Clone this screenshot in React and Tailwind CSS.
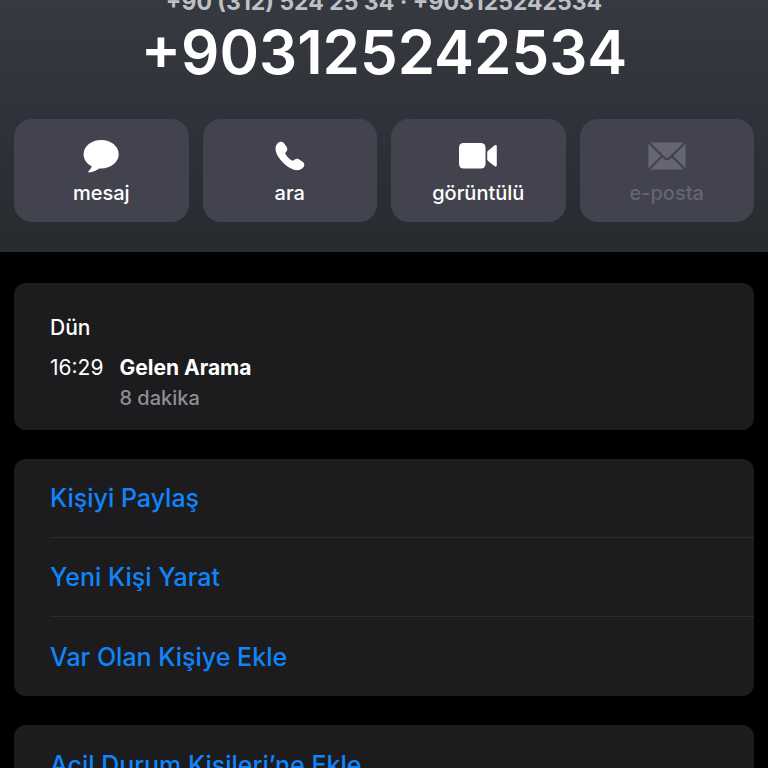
import React from 'react'

const MessageIcon = () => (
  <svg viewBox="0 0 36 34" className="w-9 h-[34px]" fill="currentColor" aria-hidden="true">
    <path d="M18.2 1C8.600 1 .6 7.200 .6 15.200c0 5 2.900 9.300 7.600 11.800.5.300.6.700.3 1.200-.7 1.400-1.900 2.900-2.900 3.900-.7.700-.3 1.500.7 1.400 3.100-.3 7-2 9.600-3.700.5-.3.900-.4 1.500-.4h.8c9.700 0 17.500-6.200 17.500-14.200S27.900 1 18.200 1z" />
  </svg>
)

const PhoneIcon = () => (
  <svg viewBox="0 0 30 30" className="w-[30px] h-[30px]" fill="currentColor" aria-hidden="true">
    <path d="M2.700 2.200C4.700.2 7.400.2 9 2.200l2.500 3.600c1.300 2 1 3.600-.5 5.100-.9 1-1 1.500-.3 2.500 1.600 2.300 3.600 4.300 5.900 5.900 1 .7 1.600.6 2.600-.3 1.600-1.400 3.300-1.700 5.100-.5l3.500 2.400c2 1.500 2 3.900.2 5.900-2.300 2.500-6 3.100-9.700 1.800-3.600-1.200-7.300-3.700-10.500-7C4.700 18.200 2.300 14.800 1.100 11.200-.1 7.500.5 4.500 2.700 2.200z" />
  </svg>
)

const VideoIcon = () => (
  <svg viewBox="0 0 38 26" className="w-[38px] h-[26px]" fill="currentColor" aria-hidden="true">
    <rect x="0" y="0" width="26.500" height="25.500" rx="4.500" />
    <path d="M28.200 9.500c0-.7.300-1.300.8-1.800l6.400-5.200c1.200-1 2.400-.5 2.400.9v18.800c0 1.400-1.200 1.900-2.400.9L29 17.900c-.5-.5-.8-1.100-.8-1.800z" />
  </svg>
)

const MailIcon = () => (
  <svg viewBox="0 0 38 28" className="w-[38px] h-7" fill="currentColor" aria-hidden="true">
    <path d="M2.300.4h33.400L20.600 15.200c-1 1-2.200 1-3.200 0z" />
    <path d="M.4 1.800 12.800 14 .4 26.200z" />
    <path d="M37.600 1.800v24.400L25.200 14z" />
    <path d="M2.300 27.600 14.300 15.500l1.500 1.500c2 1.900 4.400 1.900 6.400 0l1.500-1.500 12 12.100z" />
  </svg>
)

const actions = [
  { label: 'mesaj', icon: <MessageIcon /> },
  { label: 'ara', icon: <PhoneIcon /> },
  { label: 'görüntülü', icon: <VideoIcon /> },
  { label: 'e-posta', icon: <MailIcon />, disabled: true },
]

const contactLinks = ['Kişiyi Paylaş', 'Yeni Kişi Yarat', 'Var Olan Kişiye Ekle']
const emergencyLinks = ['Acil Durum Kişileri’ne Ekle']

function ActionButton({ label, icon, disabled }) {
  return (
    <button
      type="button"
      disabled={disabled}
      className="flex flex-col items-center rounded-[18px] bg-[#42434e] pt-[19px] pb-3.5 text-white disabled:text-[#656671]"
    >
      <span className="flex h-9 items-center justify-center">{icon}</span>
      <span className="mt-1 text-xl leading-[30px] font-medium">{label}</span>
    </button>
  )
}

function LinkList({ items }) {
  return (
    <ul className="overflow-hidden rounded-xl bg-[#1c1c1e] pl-9">
      {items.map((item) => (
        <li key={item} className="h-[79px] border-b border-[#2c2c2e] last:border-b-0">
          <a href="#" className="flex h-full items-center text-[25px] leading-8 font-medium text-[#0f84fb]">{item}</a>
        </li>
      ))}
    </ul>
  )
}

function App() {
  return (
    <div className="h-screen overflow-hidden bg-black font-['Inter',sans-serif] text-white">
      <header className="-mt-3 bg-linear-to-b from-[#383a41] via-[#30323b] to-[#272a2e] px-3.5 pb-[30px] text-center">
        <p className="text-[23px] leading-7 font-bold text-[#bfc0c6]">+90 (312) 524 25 34 · +903125242534</p>
        <h1 className="text-[60px] leading-[72px] font-semibold">+903125242534</h1>
        <div className="mt-[31px] grid grid-cols-4 gap-3.5">
          {actions.map((a) => (
            <ActionButton key={a.label} {...a} />
          ))}
        </div>
      </header>

      <main className="flex flex-col gap-[29px] px-3.5 pt-[31px]">
        <section className="rounded-xl bg-[#1c1c1e] px-9 pt-[29px] pb-4 text-[21px]">
          <h2 className="leading-8 font-medium">Dün</h2>
          <div className="mt-2 flex gap-4 leading-[31px]">
            <time>16:29</time>
            <div>
              <p className="font-bold">Gelen Arama</p>
              <p className="text-xl leading-[31px] font-medium text-[#8e8e93]">8 dakika</p>
            </div>
          </div>
        </section>
        <LinkList items={contactLinks} />
        <LinkList items={emergencyLinks} />
      </main>
    </div>
  )
}

export default App
